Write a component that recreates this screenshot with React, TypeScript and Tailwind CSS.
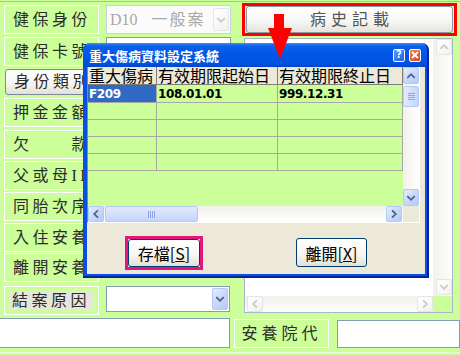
import React from "react";

const UP = "M4.5 9.5L8 6L11.5 9.5";
const DOWN = "M4.5 6.5L8 10L11.5 6.5";
const LEFT = "M9.5 4.5L6 8L9.5 11.5";
const RIGHT = "M6.5 4.5L10 8L6.5 11.5";

function Chev({ d, color }: { d: string; color: string }) {
  return (
    <svg width="16" height="16" viewBox="0 0 16 16" className="block">
      <path d={d} fill="none" stroke={color} strokeWidth="2" strokeLinecap="square" />
    </svg>
  );
}

function SB({ d, cls }: { d: string; cls: string }) {
  return (
    <div
      className={`${cls} flex items-center justify-center rounded-[2px] border border-[#b4c8f6] bg-[linear-gradient(135deg,#e6eefe_0%,#c8d8fc_50%,#b6caf8_100%)]`}
    >
      <Chev d={d} color="#4d6185" />
    </div>
  );
}

function DB({ d, cls }: { d: string; cls: string }) {
  return (
    <div
      className={`${cls} flex items-center justify-center rounded-[2px] border border-[#e2e5ea] bg-[linear-gradient(135deg,#ffffff_0%,#f2f1ec_100%)]`}
    >
      <Chev d={d} color="#c8c8c8" />
    </div>
  );
}

function Label({ text, cls = "" }: { text: string; cls?: string }) {
  return (
    <div
      className={`w-[95px] h-full border border-white flex items-center pl-[8px] overflow-hidden whitespace-nowrap text-[16px] tracking-[3.5px] text-[#2b2b2b] ${cls}`}
    >
      {text}
    </div>
  );
}

function XPButton({ children, cls }: { children: React.ReactNode; cls: string }) {
  return (
    <div
      className={`${cls} flex items-center justify-center rounded-[3px] border border-[#003c74] bg-[linear-gradient(180deg,#ffffff_0%,#f6f5f0_60%,#e3e0d4_100%)] text-[16px] text-black font-['Noto_Sans_CJK_TC',sans-serif] leading-none`}
    >
      {children}
    </div>
  );
}

export default function App() {
  const rows = [
    { id: 4, text: "押金金額", mt: "mt-[3px]" },
    { id: 5, text: "欠　　款", mt: "mt-[3px]" },
    { id: 6, text: "父或母ID", mt: "mt-[2px]" },
    { id: 7, text: "同胎次序", mt: "mt-[2px]" },
    { id: 8, text: "入住安養", mt: "mt-[2px]" },
    { id: 9, text: "離開安養", mt: "mt-[1px]" },
  ];

  return (
    <div className="relative w-[460px] h-[355px] overflow-hidden bg-[#ccff99] font-['Liberation_Serif','Noto_Sans_CJK_TC',serif]">
      <div className="h-[1px] mt-[1px] bg-[#a9c09a]" />

      <div className="flex">
        {/* left column */}
        <div className="w-[232px] pl-[4px] flex flex-col">
          <div className="flex mt-[3px] h-[29px]">
            <Label text="健保身份" />
            <div className="ml-[7px] w-[125px] h-[29px] border border-[#c9d2dc] bg-[#fbfbfb] flex items-center">
              <div className="flex-1 pl-[3px] text-[16px] text-[#a8a8a8] whitespace-nowrap leading-none">
                <span>D10</span>
                <span className="ml-[14px] tracking-[2px]">一般案</span>
              </div>
              <DB d={DOWN} cls="w-[16px] h-[23px] mr-[1px]" />
            </div>
          </div>
          <div className="flex mt-[3px] h-[29px]">
            <Label text="健保卡號" />
            <div className="ml-[7px] w-[125px] h-[29px] border border-[#7f9db9] bg-white" />
          </div>
          <div className="flex mt-[3px] h-[26px] pl-[1px]">
            <div className="w-[95px] h-full rounded-[3px] border border-[#7a8a9c] bg-[linear-gradient(180deg,#ffffff_0%,#f4f4ee_60%,#e2e0d6_100%)] flex items-center pl-[8px] overflow-hidden whitespace-nowrap text-[16px] tracking-[3.5px] text-[#2b2b2b]">
              身份類別
            </div>
          </div>
          {rows.map((r) => (
            <div key={r.id} className={`flex h-[29px] ${r.mt}`}>
              <Label text={r.text} />
            </div>
          ))}
          <div className="flex mt-[4px] h-[29px]">
            <div className="w-[95px] h-full border border-white p-[4px]">
              <div className="w-full h-full bg-[#e6e6da] flex items-center pl-[3px] whitespace-nowrap text-[16px] tracking-[3.5px] text-[#2b2b2b] overflow-hidden">
                結案原因
              </div>
            </div>
            <div className="ml-[7px] w-[124px] h-[26px] border border-[#7f9db9] bg-white flex items-center justify-end">
              <SB d={DOWN} cls="w-[16px] h-[22px] mr-[1px]" />
            </div>
          </div>
        </div>

        {/* right column */}
        <div className="ml-[10px] w-[215px] flex flex-col">
          <div className="mt-[1px] h-[33px] border-[3px] border-[#ff0000] px-[1px]">
            <div className="w-full h-full rounded-[3px] border border-[#8a9aab] bg-[linear-gradient(180deg,#ffffff_0%,#f5f5f2_60%,#e4e3dc_100%)] flex items-center justify-center text-[16px] tracking-[5px] text-[#555555] pl-[5px]">
              病史記載
            </div>
          </div>
          <div className="ml-[2px] mt-[2px] w-[209px] h-[275px] border border-[#a7b7c9] bg-white flex flex-col">
            <div className="flex flex-1">
              <div className="flex-1" />
              <div className="w-[19px] flex flex-col bg-[linear-gradient(90deg,#f2f1ec,#fdfdfd)]">
                <DB d={UP} cls="w-[16px] h-[16px] ml-auto" />
                <div className="flex-1" />
                <DB d={DOWN} cls="w-[16px] h-[16px] ml-auto mb-[1px]" />
              </div>
            </div>
            <div className="flex h-[16px]">
              <div className="flex-1 flex bg-[linear-gradient(180deg,#f2f1ec,#fdfdfd)]">
                <DB d={LEFT} cls="w-[16px] h-[16px] ml-[2px]" />
                <div className="flex-1" />
                <DB d={RIGHT} cls="w-[16px] h-[16px]" />
              </div>
              <div className="w-[19px] bg-[#ccff99]" />
            </div>
          </div>
        </div>
      </div>

      {/* bottom row */}
      <div className="flex mt-[3px]">
        <div className="-ml-[1px] w-[233px] h-[30px] border border-[#7f9db9] bg-white" />
        <div className="ml-[4px] mt-[1px] w-[95px] h-[29px] border border-white flex items-center pl-[6px] text-[16px] tracking-[4px] text-[#2b2b2b] whitespace-nowrap">
          安養院代
        </div>
        <div className="ml-[8px] mt-[2px] w-[124px] h-[28px] border border-[#7f9db9] bg-white" />
      </div>
      <div className="mt-[4px] h-[2px] border-t border-[#eefbe0]" />

      {/* dialog */}
      <div className="absolute left-[83px] top-[43px] w-[346px] h-[235px] rounded-t-[7px] overflow-hidden bg-[#0a4fe2] border-r-2 border-b-2 border-[#00229e] flex flex-col">
        <div className="h-[24px] flex items-center pl-[6px] pr-[6px] bg-[linear-gradient(180deg,#3f8ef8_0%,#0a60ea_12%,#0056e6_50%,#0052df_85%,#0046cc_100%)]">
          <span className="text-white font-bold text-[13px] leading-none font-['Noto_Sans_CJK_TC',sans-serif] pt-[1px]">
            重大傷病資料設定系統
          </span>
          <div className="flex-1" />
          <div className="w-[12px] h-[13px] rounded-[2px] border border-white bg-[linear-gradient(135deg,#5a95ff,#1c5ee8)] flex items-center justify-center text-white font-bold text-[10px] leading-none font-['DejaVu_Sans',sans-serif]">
            ?
          </div>
          <div className="ml-[4px] w-[12px] h-[13px] rounded-[2px] border border-white bg-[linear-gradient(135deg,#f08a5c,#d8401a)] flex items-center justify-center">
            <svg width="8" height="8" viewBox="0 0 8 8" className="block">
              <path d="M1 1L7 7M7 1L1 7" stroke="white" strokeWidth="1.8" />
            </svg>
          </div>
        </div>
        <div className="flex-1 pl-[4px] pr-[2px] pb-[2px] flex flex-col">
          <div className="flex-1 bg-[#ece9d8] flex flex-col">
            {/* grid */}
            <div className="w-[333px] h-[156px] border-l border-l-[#8a8a8a] border-r border-r-white border-b border-b-white flex flex-col">
              <div className="flex flex-1">
                <div className="w-[315px] bg-[#ccff99] flex flex-col">
                  <div className="flex h-[18px] bg-[#ece9d8] text-[16px] leading-[17px] text-black font-['Noto_Sans_CJK_TC',sans-serif] whitespace-nowrap">
                    <div className="w-[69px] border-r border-b border-[#807e74] pl-[1px]">重大傷病</div>
                    <div className="w-[121px] border-r border-b border-[#807e74] pl-[1px]">有效期限起始日</div>
                    <div className="w-[125px] border-r border-b border-[#807e74] pl-[1px]">有效期限終止日</div>
                  </div>
                  <div className="flex h-[18px] text-[12px] tracking-[-0.4px] font-bold font-['DejaVu_Sans',sans-serif] leading-none">
                    <div className="w-[69px] border-r border-b border-[#a8a8a0] bg-[#316ac5] text-white flex items-center pl-[1px]">F209</div>
                    <div className="w-[121px] border-r border-b border-[#a8a8a0] text-black flex items-center pl-[1px]">108.01.01</div>
                    <div className="w-[125px] border-r border-b border-[#a8a8a0] text-black flex items-center pl-[1px]">999.12.31</div>
                  </div>
                  {[1, 2, 3, 4].map((i) => (
                    <div key={i} className="flex h-[17px]">
                      <div className="w-[69px] border-r border-b border-[#a8a8a0]" />
                      <div className="w-[121px] border-r border-b border-[#a8a8a0]" />
                      <div className="w-[125px] border-r border-b border-[#a8a8a0]" />
                    </div>
                  ))}
                </div>
                <div className="w-[16px] flex flex-col bg-[linear-gradient(90deg,#f3f1ec,#fefefe)]">
                  <SB d={UP} cls="w-[16px] h-[17px]" />
                  <div className="mt-[2px] w-[16px] h-[21px] rounded-[2px] border border-[#b4c8f6] bg-[linear-gradient(90deg,#e2ebfe,#c4d5fc)] flex flex-col items-center justify-center gap-[1px]">
                    <div className="w-[7px] h-[1px] bg-[#8ea6e4]" />
                    <div className="w-[7px] h-[1px] bg-[#8ea6e4]" />
                    <div className="w-[7px] h-[1px] bg-[#8ea6e4]" />
                    <div className="w-[7px] h-[1px] bg-[#8ea6e4]" />
                  </div>
                  <div className="flex-1" />
                  <SB d={DOWN} cls="w-[16px] h-[17px]" />
                </div>
              </div>
              <div className="flex h-[16px]">
                <div className="w-[315px] flex bg-[linear-gradient(180deg,#f3f1ec,#fefefe)]">
                  <SB d={LEFT} cls="w-[16px] h-[16px]" />
                  <div className="ml-[1px] w-[93px] h-[16px] rounded-[2px] border border-[#b4c8f6] bg-[linear-gradient(180deg,#e2ebfe,#c4d5fc)] flex items-center justify-center gap-[1px]">
                    <div className="w-[1px] h-[7px] bg-[#8ea6e4]" />
                    <div className="w-[1px] h-[7px] bg-[#8ea6e4]" />
                    <div className="w-[1px] h-[7px] bg-[#8ea6e4]" />
                    <div className="w-[1px] h-[7px] bg-[#8ea6e4]" />
                  </div>
                  <div className="flex-1" />
                  <SB d={RIGHT} cls="w-[16px] h-[16px] mr-[1px]" />
                </div>
                <div className="flex-1 bg-[#ece9d8]" />
              </div>
            </div>
            {/* buttons */}
            <div className="flex-1 flex items-start">
              <div className="ml-[38px] mt-[13px] w-[78px] h-[34px] border-[3px] border-[#e0187c]">
                <XPButton cls="w-full h-full">
                  存檔[<u>S</u>]
                </XPButton>
              </div>
              <XPButton cls="ml-[93px] mt-[15px] w-[71px] h-[29px]">
                離開[<u>X</u>]
              </XPButton>
            </div>
          </div>
        </div>
      </div>

      {/* red arrow */}
      <svg className="absolute left-[268px] top-[14px]" width="24" height="45" viewBox="0 0 24 45">
        <polygon points="6,0 16,0 16,14 24,14 12,45 0,14 6,14" fill="#ff0000" />
      </svg>
    </div>
  );
}
